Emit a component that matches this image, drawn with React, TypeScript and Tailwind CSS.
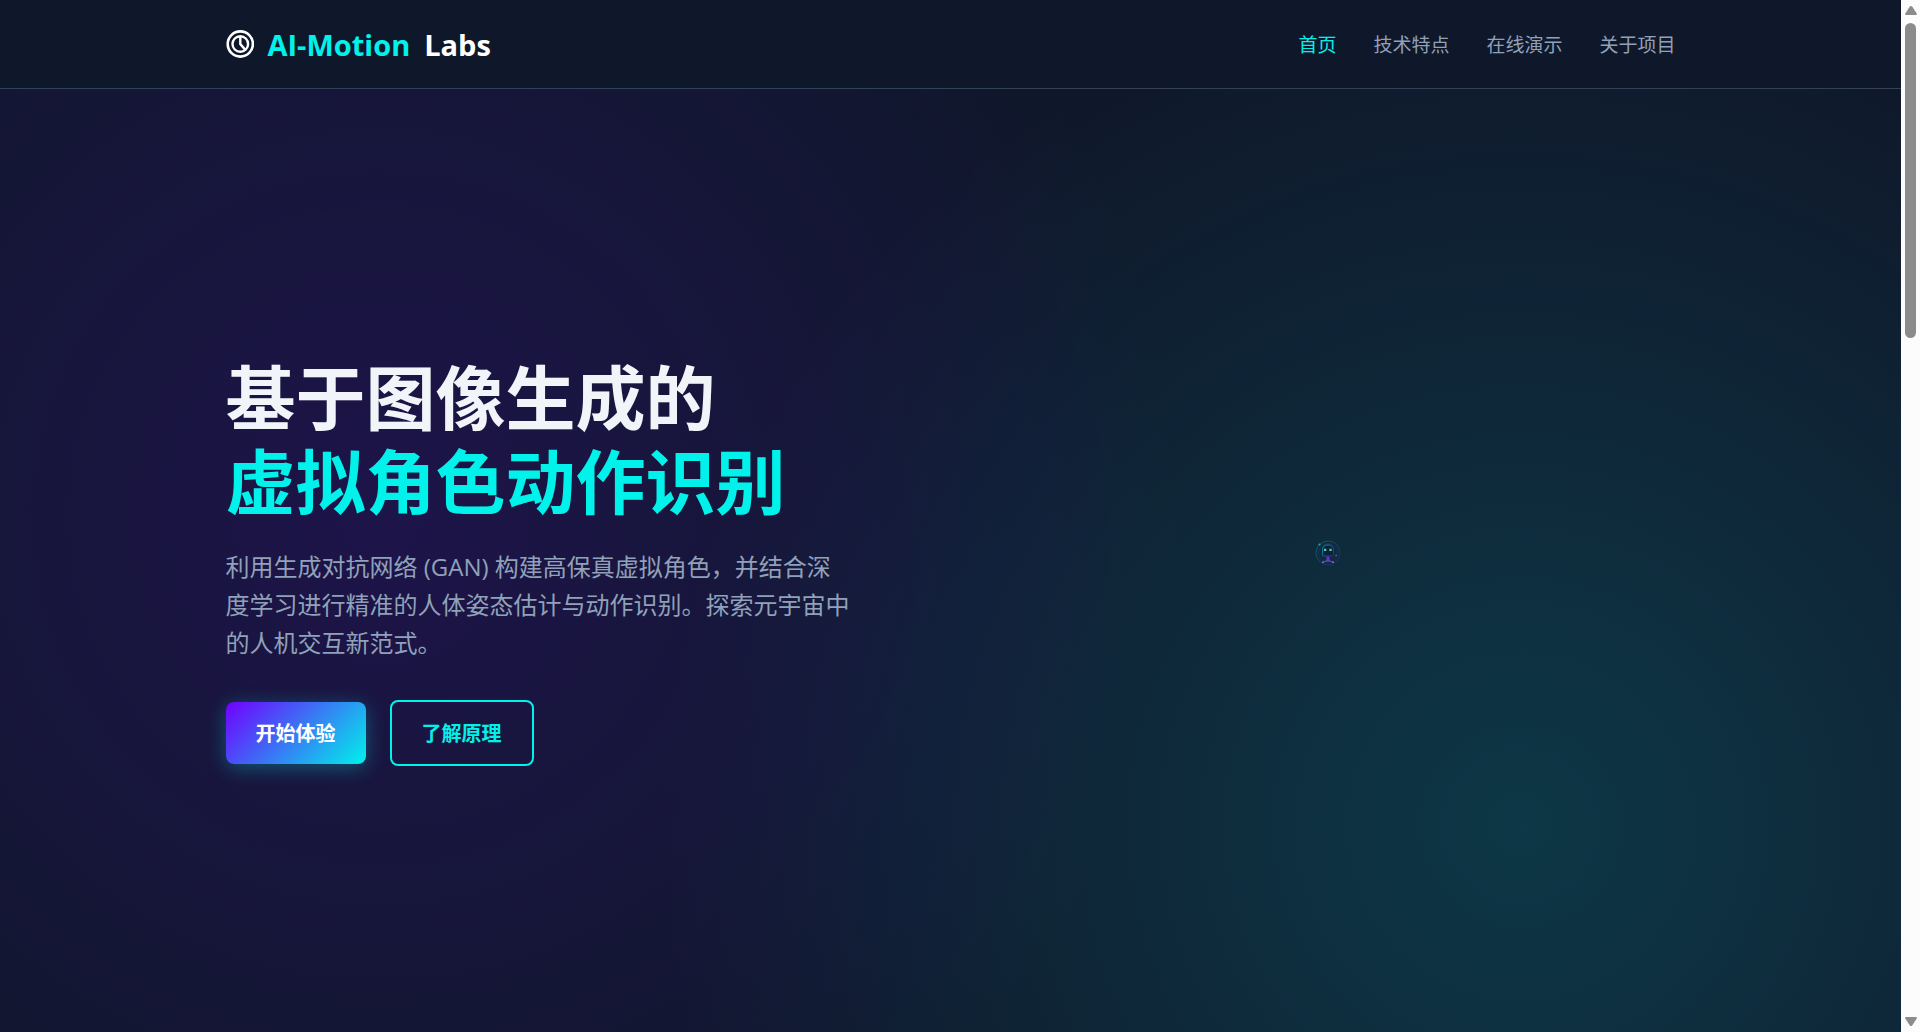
import type { ReactNode } from "react";
import { clsx } from "clsx";

const navItems = [
  { label: "首页", href: "#home", active: true },
  { label: "技术特点", href: "#features" },
  { label: "在线演示", href: "#demo" },
  { label: "关于项目", href: "#about" },
];

function LogoMark() {
  return (
    <svg viewBox="0 0 28 28" className="size-7" fill="none" stroke="currentColor" aria-hidden="true">
      <circle cx="14.3" cy="14" r="12.6" strokeWidth="2.6" />
      <circle cx="14.3" cy="14" r="7.8" strokeWidth="2.4" />
      <path d="M14.300 6.500V14l4.800 5.600" strokeWidth="2.4" />
    </svg>
  );
}

function Robot() {
  return (
    <svg viewBox="0 0 26 26" className="size-[26px]" fill="none" role="img" aria-label="AI">
      <defs>
        <linearGradient id="robot" x1="0" y1="0" x2="1" y2="1">
          <stop offset="0" stopColor="#00f2ea" />
          <stop offset="1" stopColor="#7000ff" />
        </linearGradient>
      </defs>
      <circle cx="13" cy="13" r="12" stroke="url(#robot)" strokeWidth="0.8" opacity="0.35" />
      <circle cx="13" cy="13" r="9.5" stroke="url(#robot)" strokeWidth="0.5" opacity="0.2" />
      <path
        d="M7.500 15V9.500a4.500 4.500 0 0 1 4.500-4.500h2a4.500 4.500 0 0 1 4.500 4.500V14a2 2 0 0 1-2 2h-8a1 1 0 0 1-1-1z"
        fill="#0f172a"
        fillOpacity="0.6"
        stroke="url(#robot)"
        strokeWidth="0.8"
        opacity="0.75"
      />
      <path d="M9 8.800h2.300v2.300H9zM14.400 8.800h2.300v2.300h-2.300z" fill="#3fd0d0" />
      <path d="M11.500 16.800h3v4h-3z" fill="#7a2ff0" opacity="0.85" />
      <path d="M8 22.200l3-1.200h4l3 1.200" stroke="#7d6bc4" strokeWidth="1" opacity="0.8" />
      <path d="M7 21.500h1.800v1.500H7zM17.200 21.500H19V23h-1.800z" fill="#8d86c4" opacity="0.8" />
      <circle cx="4.500" cy="4.500" r="1.100" fill="#2fa8a8" />
      <circle cx="21.200" cy="15.500" r="1.100" fill="#6b4fb0" opacity="0.8" />
    </svg>
  );
}

function Container({ className, children }: { className?: string; children: ReactNode }) {
  return <div className={clsx("mx-auto w-full max-w-[1450px]", className)}>{children}</div>;
}

// Always-visible page scrollbar
function ScrollRail() {
  return (
    <div className="flex w-[19px] shrink-0 flex-col items-center justify-between bg-[#fcfcfc] py-1.5" aria-hidden="true">
      <div className="flex grow flex-col items-center gap-2">
        <svg viewBox="0 0 12 9" className="h-[9px] w-3" fill="#8b8b8b">
          <path d="M6 0q.8 0 1.200.6L11.700 7.500Q12.300 9 11 9H1Q-.3 9 .3 7.500L4.800.6Q5.200 0 6 0z" />
        </svg>
        <div className="h-[315px] w-[11px] rounded-full bg-[#8b8b8b]" />
      </div>
      <svg viewBox="0 0 12 9" className="h-[9px] w-3" fill="#8b8b8b">
        <path d="M6 9q.8 0 1.200-.6L11.700 1.500Q12.300 0 11 0H1Q-.3 0 .3 1.500L4.800 8.400Q5.200 9 6 9z" />
      </svg>
    </div>
  );
}

export default function App() {
  return (
    <div className="flex h-screen bg-[#0f172a] font-['Open_Sans','Noto_Sans_CJK_SC',sans-serif] text-slate-100">
      <div className="flex min-w-0 grow flex-col bg-[radial-gradient(circle_at_20%_50%,rgba(112,0,255,0.15)_0%,transparent_50%),radial-gradient(circle_at_80%_80%,rgba(0,242,234,0.15)_0%,transparent_50%)]">
        <header className="border-b border-slate-700 bg-[#0f172a]">
          <Container className="flex h-22 items-center justify-between">
            <a href="#home" className="flex items-center gap-3.5 text-[29px] font-bold text-white">
              <LogoMark />
              <span className="pt-0.5 text-[#00f2ea]">AI-Motion</span>
              <span className="pt-0.5">Labs</span>
            </a>
            <nav className="flex gap-[37px] pt-0.5 text-[19px]">
              {navItems.map((item) => (
                <a
                  key={item.href}
                  href={item.href}
                  className={clsx(item.active ? "text-[#00f2ea]" : "text-slate-400 hover:text-[#00f2ea]")}
                >
                  {item.label}
                </a>
              ))}
            </nav>
          </Container>
        </header>

        <main className="flex grow items-center">
          <Container className="grid grid-cols-2 items-center gap-15">
            <section>
              <h1 className="text-[70px] leading-[84px] font-bold">
                <span className="block">基于图像生成的</span>
                <span className="block text-[#00f2ea]">虚拟角色动作识别</span>
              </h1>
              <p className="mt-6 max-w-[628px] text-2xl leading-[38px] text-slate-400">
                利用生成对抗网络 (GAN) 构建高保真虚拟角色，并结合深度学习进行精准的人体姿态估计与动作识别。探索元宇宙中的人机交互新范式。
              </p>
              <div className="mt-[38px] flex items-center gap-6 text-xl font-bold">
                <button
                  type="button"
                  className="h-[62px] rounded-lg bg-[linear-gradient(135deg,#7000ff,#00f2ea)] px-[30px] pt-0.5 text-white shadow-[0_4px_20px_rgba(0,242,234,0.3)]"
                >
                  开始体验
                </button>
                <button
                  type="button"
                  className="h-[66px] rounded-lg border-2 border-[#00f2ea] px-[30px] pt-0.5 text-[#00f2ea]"
                >
                  了解原理
                </button>
              </div>
            </section>
            <div className="flex justify-center pb-4">
              <Robot />
            </div>
          </Container>
        </main>
      </div>
      <ScrollRail />
    </div>
  );
}
